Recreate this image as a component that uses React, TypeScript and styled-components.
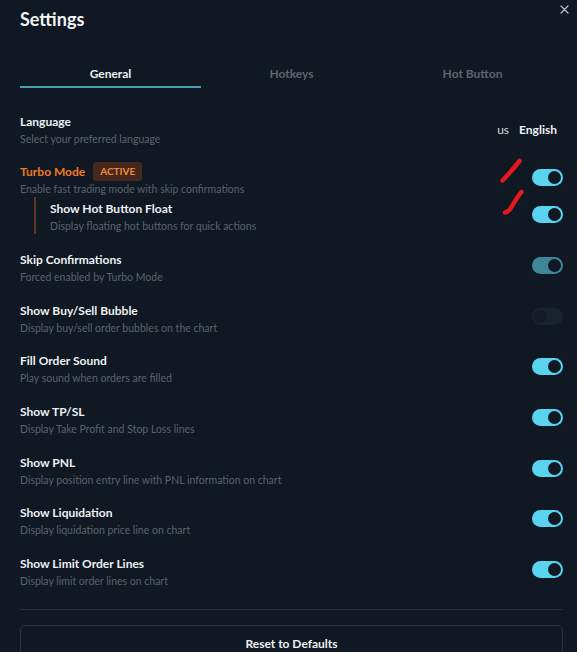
import React from "react";
import styled, { createGlobalStyle } from "styled-components";

const Global = createGlobalStyle`
  html, body { margin: 0; padding: 0; background: #0f1823; }
  body { font-family: "Lato", "Open Sans", sans-serif; color: #e9ecef; }
  * { box-sizing: border-box; }
`;

const Panel = styled.div`
  position: relative;
  width: 577px;
  height: 652px;
  overflow: hidden;
  background: #0f1823;
  padding: 7px 14px 0 20px;
`;

const Title = styled.h1`
  margin: 0;
  font-size: 18px;
  line-height: 24px;
  font-weight: 700;
  color: #f1f3f5;
`;

const Close = styled.button`
  position: absolute;
  top: 2px;
  right: 6px;
  width: 14px;
  height: 14px;
  padding: 0;
  border: none;
  background: transparent;
  display: flex;
  align-items: center;
  justify-content: center;
  cursor: pointer;
`;

const Tabs = styled.div`
  display: grid;
  grid-template-columns: repeat(3, 1fr);
  margin-top: 26px;
`;

const Tab = styled.div<{ $active?: boolean }>`
  text-align: center;
  font-size: 12px;
  line-height: 16px;
  font-weight: 700;
  padding: 9px 0 4px;
  color: ${(p) => (p.$active ? "#eef0f2" : "#5d656e")};
  border-bottom: 2px solid ${(p) => (p.$active ? "#4a9fb3" : "transparent")};
`;

const List = styled.div`
  display: flex;
  flex-direction: column;
  gap: 16.7px;
  margin-top: 24.5px;
`;

const Row = styled.div`
  display: flex;
  align-items: center;
  justify-content: space-between;
`;

const Group = styled.div`
  display: flex;
  flex-direction: column;
`;

const Texts = styled.div`
  display: flex;
  flex-direction: column;
`;

const Label = styled.div<{ $accent?: boolean }>`
  display: flex;
  align-items: center;
  gap: 8px;
  height: 17px;
  font-size: 12px;
  line-height: 17px;
  font-weight: 700;
  color: ${(p) => (p.$accent ? "#ef7a22" : "#eef0f2")};
`;

const Desc = styled.div`
  margin-top: 1px;
  font-size: 10.5px;
  line-height: 16px;
  color: #5a636d;
`;

const Badge = styled.span`
  display: inline-flex;
  align-items: center;
  height: 19px;
  margin: -1px 0;
  padding: 0 7px;
  border-radius: 3px;
  background: #46291c;
  color: #f08a3c;
  font-size: 10px;
  font-weight: 700;
`;

const SubRow = styled(Row)`
  margin-left: 14px;
  padding: 3px 0 0 14px;
  border-left: 2px solid #5e3623;
`;

const Lang = styled.div`
  display: flex;
  align-items: center;
  gap: 10px;
  font-size: 12px;
  margin-right: 6px;
`;

const LangCode = styled.span`
  color: #d6dadf;
  font-weight: 400;
`;

const LangName = styled.span`
  color: #eef0f2;
  font-weight: 700;
`;

const Track = styled.div<{ $on: boolean; $dim?: boolean }>`
  position: relative;
  flex: none;
  width: 31px;
  height: 17px;
  margin-bottom: 5px;
  border-radius: 9px;
  background: ${(p) => (p.$on ? (p.$dim ? "#3d8799" : "#5ad4ee") : "#19232e")};
`;

const Knob = styled.div<{ $on: boolean }>`
  position: absolute;
  top: 2px;
  ${(p) => (p.$on ? "right: 2px;" : "left: 2px;")}
  width: 13px;
  height: 13px;
  border-radius: 50%;
  background: ${(p) => (p.$on ? "#0f1823" : "#131c26")};
`;

const Divider = styled.hr`
  margin: 20px 0 0;
  border: none;
  border-top: 1px solid #242d38;
`;

const ResetButton = styled.button`
  margin-top: 15px;
  width: 100%;
  height: 36px;
  border: 1px solid #2a323c;
  border-radius: 5px;
  background: transparent;
  color: #eef0f2;
  font-family: inherit;
  font-size: 12px;
  font-weight: 700;
`;

const Marks = styled.svg`
  position: absolute;
  left: 0;
  top: 0;
  pointer-events: none;
`;

function Toggle({ on, dim }: { on: boolean; dim?: boolean }) {
  return (
    <Track $on={on} $dim={dim}>
      <Knob $on={on} />
    </Track>
  );
}

const items: { title: string; desc: string; on: boolean; dim?: boolean }[] = [
  { title: "Skip Confirmations", desc: "Forced enabled by Turbo Mode", on: true, dim: true },
  { title: "Show Buy/Sell Bubble", desc: "Display buy/sell order bubbles on the chart", on: false },
  { title: "Fill Order Sound", desc: "Play sound when orders are filled", on: true },
  { title: "Show TP/SL", desc: "Display Take Profit and Stop Loss lines", on: true },
  { title: "Show PNL", desc: "Display position entry line with PNL information on chart", on: true },
  { title: "Show Liquidation", desc: "Display liquidation price line on chart", on: true },
  { title: "Show Limit Order Lines", desc: "Display limit order lines on chart", on: true },
];

export default function App() {
  return (
    <>
      <Global />
      <Panel>
        <Title>Settings</Title>
        <Close aria-label="Close">
          <svg width="9" height="9" viewBox="0 0 9 9">
            <path d="M1 1L8 8M8 1L1 8" stroke="#b9c0c7" strokeWidth="1.2" strokeLinecap="round" />
          </svg>
        </Close>
        <Tabs>
          <Tab $active>General</Tab>
          <Tab>Hotkeys</Tab>
          <Tab>Hot Button</Tab>
        </Tabs>
        <List>
          <Row>
            <Texts>
              <Label>Language</Label>
              <Desc>Select your preferred language</Desc>
            </Texts>
            <Lang>
              <LangCode>us</LangCode>
              <LangName>English</LangName>
            </Lang>
          </Row>
          <Group>
            <Row>
              <Texts>
                <Label $accent>
                  Turbo Mode <Badge>ACTIVE</Badge>
                </Label>
                <Desc>Enable fast trading mode with skip confirmations</Desc>
              </Texts>
              <Toggle on />
            </Row>
            <SubRow>
              <Texts>
                <Label>Show Hot Button Float</Label>
                <Desc>Display floating hot buttons for quick actions</Desc>
              </Texts>
              <Toggle on />
            </SubRow>
          </Group>
          {items.map((it) => (
            <Row key={it.title}>
              <Texts>
                <Label>{it.title}</Label>
                <Desc>{it.desc}</Desc>
              </Texts>
              <Toggle on={it.on} dim={it.dim} />
            </Row>
          ))}
        </List>
        <Divider />
        <ResetButton>Reset to Defaults</ResetButton>
        <Marks width="577" height="652" viewBox="0 0 577 652">
          <path d="M502.5 180.5 C508 175 514 168 519.5 161" stroke="#e3191f" strokeWidth="4.5" strokeLinecap="round" fill="none" />
          <path d="M505 212.5 C508 212 510 210 512 206 C515 201 518 196 521.5 192" stroke="#e3191f" strokeWidth="4.5" strokeLinecap="round" fill="none" />
        </Marks>
      </Panel>
    </>
  );
}
